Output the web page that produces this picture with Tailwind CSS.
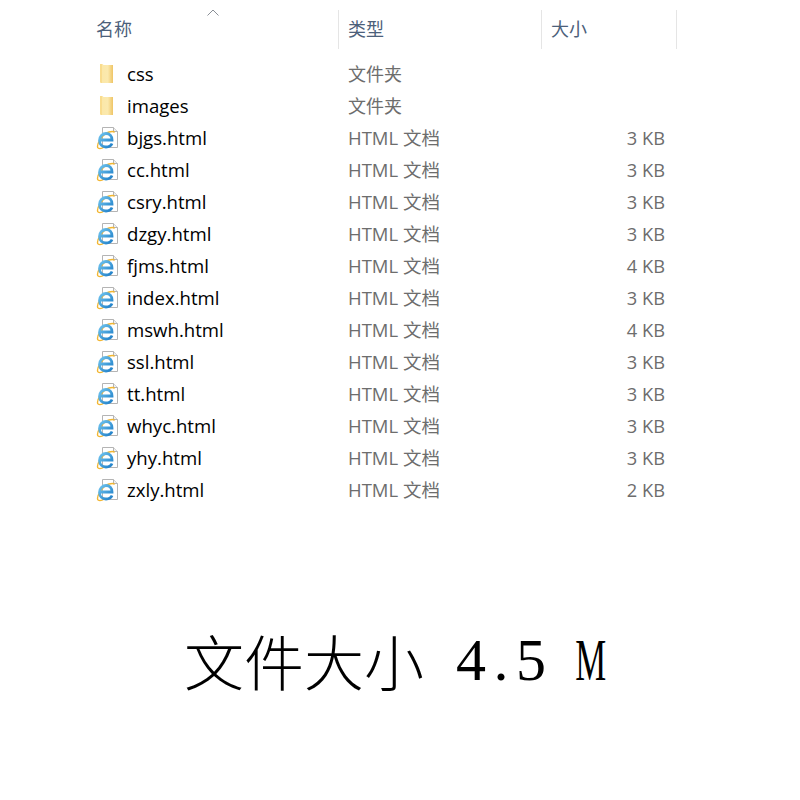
<!DOCTYPE html>
<html lang="zh">
<head>
<meta charset="utf-8">
<script src="https://cdn.jsdelivr.net/npm/@tailwindcss/browser@4"></script>
</head>
<body class="bg-white w-[800px] h-[800px] overflow-hidden font-['Open_Sans','Noto_Sans_CJK_SC',sans-serif]">
<svg class="absolute w-0 h-0">
  <defs>
    <linearGradient id="fg" x1="0" x2="1" y1="0" y2="0"><stop offset="0" stop-color="#fbe7a6"/><stop offset=".6" stop-color="#fbe9ae"/><stop offset="1" stop-color="#efc566"/></linearGradient>
    <linearGradient id="eg" x1="0" x2="1" y1="0" y2="1"><stop offset="0" stop-color="#6fc3ee"/><stop offset="1" stop-color="#1f7fc8"/></linearGradient>
    <symbol id="folder" viewBox="0 0 22 22">
      <path d="M3 1h2.500l1 1h9.500v18H4l-1-1z" fill="url(#fg)"/>
      <path d="M3 1h2v19H4l-1-1z" fill="#f9dc8e"/>
    </symbol>
    <symbol id="ie" viewBox="0 0 24 24">
      <path d="M6.500 1.500h11l4 4v16h-15z" fill="#fff" stroke="#b4b4b4"/>
      <path d="M17.500 1.500v4h4" fill="#f0f0f0" stroke="#b4b4b4"/>
      <path d="M2 22C0 19 6 8 13 6c3-.8 5-.5 5.500 .5" fill="none" stroke="#f2b632" stroke-width="1.400"/>
      <path d="M2 22c1.500 1 4 .5 6.500-1" fill="none" stroke="#f2b632" stroke-width="1.300"/>
      <path d="M4.500 14h11.500c0-4-2.500-6.500-6-6.500S3.500 10.500 3.500 14.500 6.500 21 10 21c2.800 0 5-1.300 6-3.500" fill="none" stroke="url(#eg)" stroke-width="2.800"/>
    </symbol>
  </defs>
</svg>

<header class="relative flex h-[48px] mt-[10px] ml-[87px] w-[590px] text-[18px] text-[#4c607a]">
  <svg class="absolute left-[120px] -top-[1px] w-[12px] h-[7px]" viewBox="0 0 12 7" fill="none" stroke="#8a8f96" stroke-width="1"><path d="M.5 6.500 6 1l5.500 5.500"/></svg>
  <div class="w-[252px] pl-[9px] pt-[6px] border-r border-[#e5e5e5] h-[39px]">名称</div>
  <div class="w-[203px] pl-[9px] pt-[6px] border-r border-[#e5e5e5] h-[39px]">类型</div>
  <div class="w-[135px] pl-[9px] pt-[6px] border-r border-[#e5e5e5] h-[39px]">大小</div>
</header>

<main class="ml-[97px] w-[568px] text-[18.600px] leading-[32px]">
  <div class="flex h-[32px] items-center"><svg class="w-[22px] h-[22px]"><use href="#folder"/></svg><span class="w-[229px] pl-[8px] text-black">css</span><span class="flex-1 text-[18px] text-[#6d6d6d]">文件夹</span></div>
  <div class="flex h-[32px] items-center"><svg class="w-[22px] h-[22px]"><use href="#folder"/></svg><span class="w-[229px] pl-[8px] text-black">images</span><span class="flex-1 text-[18px] text-[#6d6d6d]">文件夹</span></div>
  <div class="flex h-[32px] items-center"><svg class="w-[24px] h-[24px] -ml-[1px] mr-[-1px]"><use href="#ie"/></svg><span class="w-[229px] pl-[8px] text-black">bjgs.html</span><span class="flex-1 text-[18.500px] text-[#6d6d6d]">HTML 文档</span><span class="text-[18.300px] text-[#6d6d6d]">3 KB</span></div>
  <div class="flex h-[32px] items-center"><svg class="w-[24px] h-[24px] -ml-[1px] mr-[-1px]"><use href="#ie"/></svg><span class="w-[229px] pl-[8px] text-black">cc.html</span><span class="flex-1 text-[18.500px] text-[#6d6d6d]">HTML 文档</span><span class="text-[18.300px] text-[#6d6d6d]">3 KB</span></div>
  <div class="flex h-[32px] items-center"><svg class="w-[24px] h-[24px] -ml-[1px] mr-[-1px]"><use href="#ie"/></svg><span class="w-[229px] pl-[8px] text-black">csry.html</span><span class="flex-1 text-[18.500px] text-[#6d6d6d]">HTML 文档</span><span class="text-[18.300px] text-[#6d6d6d]">3 KB</span></div>
  <div class="flex h-[32px] items-center"><svg class="w-[24px] h-[24px] -ml-[1px] mr-[-1px]"><use href="#ie"/></svg><span class="w-[229px] pl-[8px] text-black">dzgy.html</span><span class="flex-1 text-[18.500px] text-[#6d6d6d]">HTML 文档</span><span class="text-[18.300px] text-[#6d6d6d]">3 KB</span></div>
  <div class="flex h-[32px] items-center"><svg class="w-[24px] h-[24px] -ml-[1px] mr-[-1px]"><use href="#ie"/></svg><span class="w-[229px] pl-[8px] text-black">fjms.html</span><span class="flex-1 text-[18.500px] text-[#6d6d6d]">HTML 文档</span><span class="text-[18.300px] text-[#6d6d6d]">4 KB</span></div>
  <div class="flex h-[32px] items-center"><svg class="w-[24px] h-[24px] -ml-[1px] mr-[-1px]"><use href="#ie"/></svg><span class="w-[229px] pl-[8px] text-black">index.html</span><span class="flex-1 text-[18.500px] text-[#6d6d6d]">HTML 文档</span><span class="text-[18.300px] text-[#6d6d6d]">3 KB</span></div>
  <div class="flex h-[32px] items-center"><svg class="w-[24px] h-[24px] -ml-[1px] mr-[-1px]"><use href="#ie"/></svg><span class="w-[229px] pl-[8px] text-black">mswh.html</span><span class="flex-1 text-[18.500px] text-[#6d6d6d]">HTML 文档</span><span class="text-[18.300px] text-[#6d6d6d]">4 KB</span></div>
  <div class="flex h-[32px] items-center"><svg class="w-[24px] h-[24px] -ml-[1px] mr-[-1px]"><use href="#ie"/></svg><span class="w-[229px] pl-[8px] text-black">ssl.html</span><span class="flex-1 text-[18.500px] text-[#6d6d6d]">HTML 文档</span><span class="text-[18.300px] text-[#6d6d6d]">3 KB</span></div>
  <div class="flex h-[32px] items-center"><svg class="w-[24px] h-[24px] -ml-[1px] mr-[-1px]"><use href="#ie"/></svg><span class="w-[229px] pl-[8px] text-black">tt.html</span><span class="flex-1 text-[18.500px] text-[#6d6d6d]">HTML 文档</span><span class="text-[18.300px] text-[#6d6d6d]">3 KB</span></div>
  <div class="flex h-[32px] items-center"><svg class="w-[24px] h-[24px] -ml-[1px] mr-[-1px]"><use href="#ie"/></svg><span class="w-[229px] pl-[8px] text-black">whyc.html</span><span class="flex-1 text-[18.500px] text-[#6d6d6d]">HTML 文档</span><span class="text-[18.300px] text-[#6d6d6d]">3 KB</span></div>
  <div class="flex h-[32px] items-center"><svg class="w-[24px] h-[24px] -ml-[1px] mr-[-1px]"><use href="#ie"/></svg><span class="w-[229px] pl-[8px] text-black">yhy.html</span><span class="flex-1 text-[18.500px] text-[#6d6d6d]">HTML 文档</span><span class="text-[18.300px] text-[#6d6d6d]">3 KB</span></div>
  <div class="flex h-[32px] items-center"><svg class="w-[24px] h-[24px] -ml-[1px] mr-[-1px]"><use href="#ie"/></svg><span class="w-[229px] pl-[8px] text-black">zxly.html</span><span class="flex-1 text-[18.500px] text-[#6d6d6d]">HTML 文档</span><span class="text-[18.300px] text-[#6d6d6d]">2 KB</span></div>
</main>

<footer class="mt-[124px] ml-[184px] h-[60px] flex items-center whitespace-pre leading-none text-black">
  <span class="text-[60px] font-extralight font-['Noto_Sans_CJK_SC',sans-serif]">文件大小</span>
  <div class="flex ml-[32px] text-[60px] font-['Liberation_Serif',serif]">
    <span class="w-[30px] text-center">4</span><span class="w-[30px] text-center">.</span><span class="w-[30px] text-center">5</span><span class="w-[30px]"></span><span class="w-[30px] flex justify-center"><span class="scale-x-[.58] inline-block">M</span></span>
  </div>
</footer>
</body>
</html>
